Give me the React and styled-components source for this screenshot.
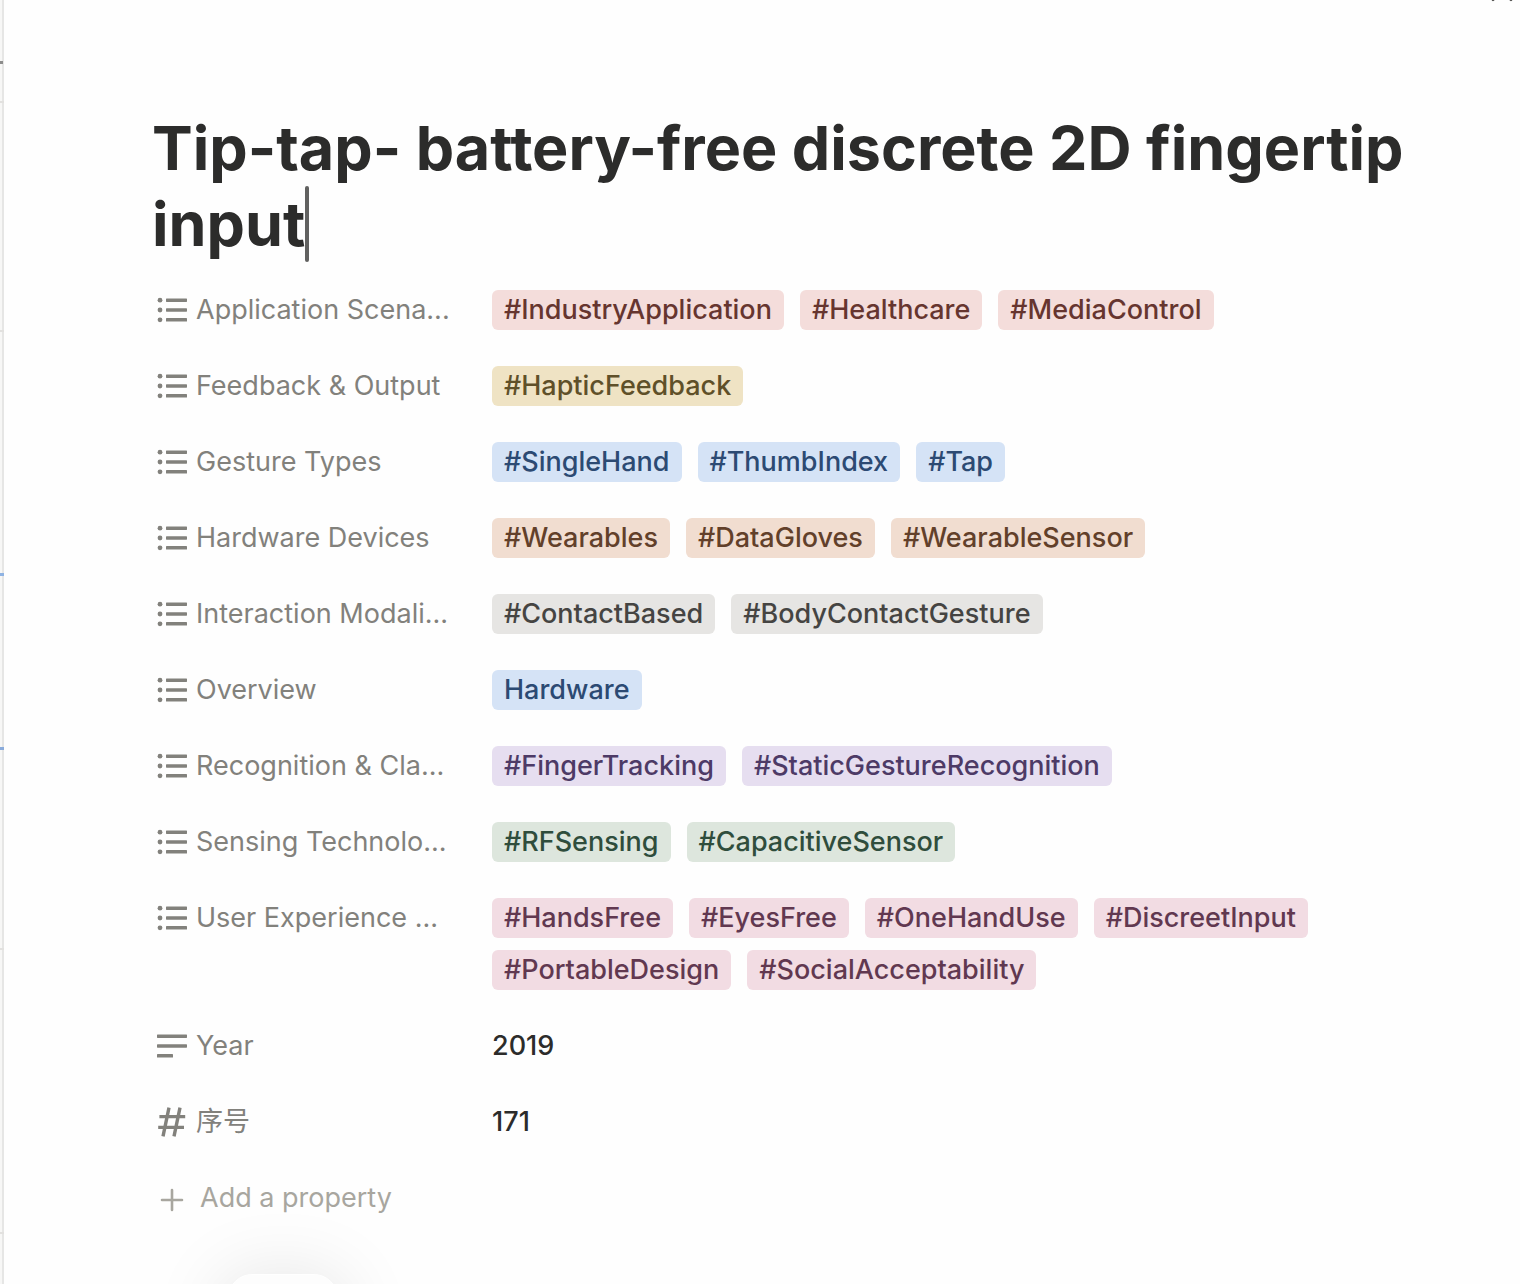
import React from "react";
import styled, { createGlobalStyle } from "styled-components";

const GlobalStyle = createGlobalStyle`
  *, *::before, *::after { box-sizing: border-box; }
  body {
    margin: 0;
    background: #fefefe;
    color: #2c2c2b;
    font-family: Inter, "Noto Sans CJK SC", sans-serif;
    -webkit-font-smoothing: antialiased;
  }
`;

const Page = styled.div`
  position: relative;
  display: flex;
  min-height: 100vh;
  overflow: hidden;
`;

const BackgroundEdge = styled.div`
  display: flex;
  flex-direction: column;
  flex: none;
  width: 4px;
  background: #f7f7f6;
  border-right: 2px solid #e6e6e5;
`;

const EdgeCell = styled.div`
  flex: none;
  width: ${(p) => p.$width || 4}px;
  height: ${(p) => p.$height}px;
  border-bottom: ${(p) => p.$line}px solid ${(p) => p.$color};
`;

const Panel = styled.main`
  flex: 1;
  min-width: 0;
  padding: 110px 96px 50px 148px;
`;

const CloseButton = styled.button`
  position: absolute;
  top: -22px;
  right: 4px;
  display: flex;
  width: 28px;
  height: 28px;
  padding: 2px;
  border: 0;
  background: none;
  color: #4a4a48;
`;

const Title = styled.h1`
  margin: 0 0 14px;
  font-size: 61px;
  font-weight: 700;
  line-height: 76px;
`;

const Caret = styled.span`
  display: inline-block;
  width: 4px;
  height: 76px;
  border-radius: 2px;
  background: #616160;
  vertical-align: bottom;
`;

const Properties = styled.dl`
  display: flex;
  flex-direction: column;
  gap: 8px;
  margin: 0 0 8px;
`;

const Row = styled.div`
  display: grid;
  grid-template-columns: 300px minmax(0, 1fr);
  column-gap: 40px;
  align-items: start;
  padding: 14px 0;
`;

const Name = styled.dt`
  min-width: 0;
`;

const NameButton = styled.button`
  display: flex;
  align-items: center;
  gap: ${(p) => (p.$muted ? 12 : 8)}px;
  width: 100%;
  height: 40px;
  padding: 0 0 0 4px;
  border: 0;
  background: none;
  color: ${(p) => (p.$muted ? "#a8a69f" : "#82817c")};
  font: inherit;
  font-size: 27px;
  line-height: 40px;
  text-align: left;
  white-space: nowrap;
`;

const Icon = styled.svg`
  flex: none;
  width: 32px;
  height: 32px;
`;

const Value = styled.dd`
  display: flex;
  flex-wrap: wrap;
  gap: 12px 16px;
  margin: 0;
  font-size: 27px;
  font-weight: 500;
  line-height: 40px;
`;

const palette = {
  red: ["#f4dddb", "#66352f"],
  yellow: ["#efe3c4", "#5f5029"],
  blue: ["#d5e3f6", "#2c4a73"],
  orange: ["#f1ddd0", "#62402a"],
  gray: ["#e6e5e3", "#454442"],
  purple: ["#e6def0", "#4d3a66"],
  green: ["#dde6dd", "#2f4d3c"],
  pink: ["#f2dce3", "#613850"],
};

const Tag = styled.span`
  height: 40px;
  padding: 0 12px;
  border-radius: 6px;
  background: ${(p) => palette[p.$color][0]};
  color: ${(p) => palette[p.$color][1]};
  white-space: nowrap;
`;

const FloatingCard = styled.div`
  position: absolute;
  left: 228px;
  bottom: -90px;
  width: 110px;
  height: 100px;
  border-radius: 24px;
  background: #fdfdfd;
  border: 1px solid #ffffff;
  box-shadow: 0 8px 72px 8px rgba(0, 0, 0, 0.1);
`;

const ListIcon = () => (
  <Icon viewBox="0 0 32 32" fill="currentColor" aria-hidden="true">
    {[6.2, 16, 25.8].map((y) => (
      <g key={y}>
        <circle cx="4" cy={y} r="2.4" />
        <rect x="10" y={y - 1.7} width="21" height="3.4" rx="0.6" />
      </g>
    ))}
  </Icon>
);

const TextIcon = () => (
  <Icon viewBox="0 0 32 32" fill="currentColor" aria-hidden="true">
    <rect x="1" y="4.5" width="30" height="3.4" rx="0.6" />
    <rect x="1" y="14.3" width="30" height="3.4" rx="0.6" />
    <rect x="1" y="24.1" width="16" height="3.4" rx="0.6" />
  </Icon>
);

const NumberIcon = () => (
  <Icon viewBox="0 0 32 32" fill="none" stroke="currentColor" strokeWidth="3.4" aria-hidden="true">
    <path d="M3.4 10.6H29.2M2.2 21.4H28M13 1.6L7 30.4M24 1.6L18 30.4" />
  </Icon>
);

const PlusIcon = () => (
  <Icon viewBox="0 0 32 32" fill="none" stroke="currentColor" strokeWidth="2.6" strokeLinecap="round" aria-hidden="true">
    <path d="M16 8V28M6 18H26" />
  </Icon>
);

const properties = [
  { name: "Application Scena...", color: "red", tags: ["#IndustryApplication", "#Healthcare", "#MediaControl"] },
  { name: "Feedback & Output", color: "yellow", tags: ["#HapticFeedback"] },
  { name: "Gesture Types", color: "blue", tags: ["#SingleHand", "#ThumbIndex", "#Tap"] },
  { name: "Hardware Devices", color: "orange", tags: ["#Wearables", "#DataGloves", "#WearableSensor"] },
  { name: "Interaction Modali...", color: "gray", tags: ["#ContactBased", "#BodyContactGesture"] },
  { name: "Overview", color: "blue", tags: ["Hardware"] },
  { name: "Recognition & Cla...", color: "purple", tags: ["#FingerTracking", "#StaticGestureRecognition"] },
  { name: "Sensing Technolo...", color: "green", tags: ["#RFSensing", "#CapacitiveSensor"] },
  {
    name: "User Experience ...",
    color: "pink",
    tags: ["#HandsFree", "#EyesFree", "#OneHandUse", "#DiscreetInput", "#PortableDesign", "#SocialAcceptability"],
  },
  { name: "Year", icon: TextIcon, text: "2019" },
  { name: "序号", icon: NumberIcon, text: "171" },
];

const edgeCells = [
  { height: 64, line: 3, color: "#8c8c8b", width: 3 },
  { height: 39, line: 2, color: "#e2e1df" },
  { height: 229, line: 2, color: "#e2e1df" },
  { height: 244, line: 3, color: "#8fb3e3" },
  { height: 174, line: 3, color: "#8aabdb" },
  { height: 200, line: 2, color: "#e2e1df" },
  { height: 284, line: 2, color: "#e2e1df" },
];

function Property({ name, icon: Glyph = ListIcon, color, tags, text }) {
  return (
    <Row>
      <Name>
        <NameButton type="button">
          <Glyph />
          {name}
        </NameButton>
      </Name>
      <Value>
        {tags ? tags.map((tag) => <Tag key={tag} $color={color}>{tag}</Tag>) : text}
      </Value>
    </Row>
  );
}

export default function App() {
  return (
    <>
      <GlobalStyle />
      <Page>
        <BackgroundEdge>
          {edgeCells.map((cell, i) => (
            <EdgeCell key={i} $width={cell.width} $height={cell.height} $line={cell.line} $color={cell.color} />
          ))}
        </BackgroundEdge>
        <Panel>
          <Title>
            Tip-tap- battery-free discrete 2D fingertip input<Caret />
          </Title>
          <Properties>
            {properties.map((property) => (
              <Property key={property.name} {...property} />
            ))}
          </Properties>
          <Row>
            <NameButton type="button" $muted>
              <PlusIcon />
              Add a property
            </NameButton>
          </Row>
        </Panel>
        <CloseButton type="button" aria-label="Close">
          <svg width="24" height="24" viewBox="0 0 24 24" fill="none" stroke="currentColor" strokeWidth="2.4" strokeLinecap="round" aria-hidden="true">
            <path d="M3 2L21 20M21 2L3 20" />
          </svg>
        </CloseButton>
        <FloatingCard />
      </Page>
    </>
  );
}
